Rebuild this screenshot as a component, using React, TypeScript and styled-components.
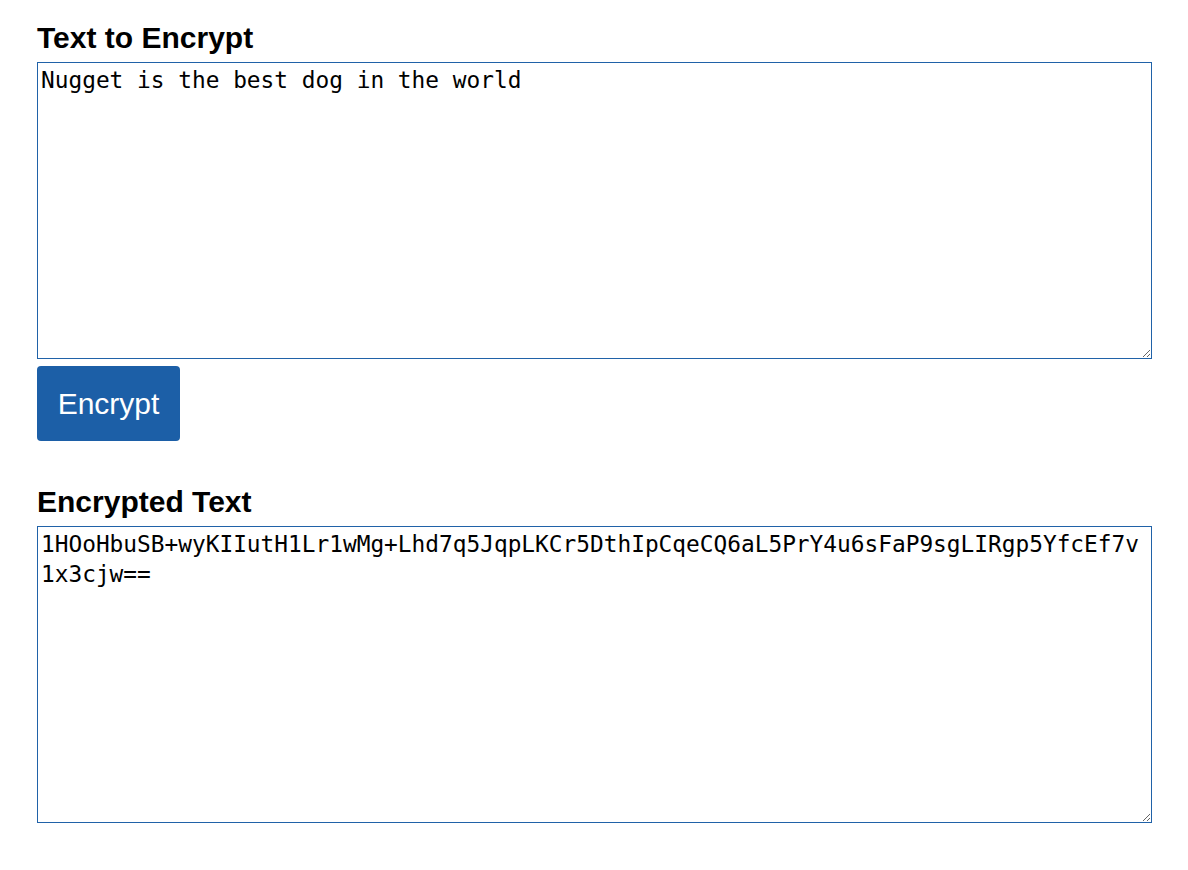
import React from "react";
import styled, { createGlobalStyle } from "styled-components";

const Global = createGlobalStyle`
  html, body { margin: 0; padding: 0; background: #ffffff; }
  body { font-family: "Liberation Sans", Arial, sans-serif; color: #000; }
`;

const Page = styled.main`
  display: flex;
  flex-direction: column;
  align-items: flex-start;
  padding: 20px 36px 40px 37px;
`;

const Heading = styled.h2<{ $top?: number }>`
  margin: ${(p) => p.$top ?? 0}px 0 6px 0;
  font-size: 30px;
  line-height: 36px;
  font-weight: 700;
`;

const Area = styled.textarea`
  box-sizing: border-box;
  width: 1115px;
  height: 297px;
  margin: 0;
  padding: 2px 3px;
  border: 1px solid #2062a8;
  border-radius: 0;
  font-family: "DejaVu Sans Mono", "Liberation Mono", monospace;
  font-size: 22.8px;
  line-height: 30px;
  color: #000;
  background: #fff;
  outline: none;
  resize: both;
  word-break: break-all;
`;

const Button = styled.button`
  box-sizing: border-box;
  margin-top: 7px;
  width: 143px;
  height: 75px;
  border: none;
  border-radius: 4px;
  background: #1c5fa7;
  color: #fff;
  font-family: "Liberation Sans", Arial, sans-serif;
  font-size: 30px;
  cursor: pointer;
`;

export default function App() {
  return (
    <>
      <Global />
      <Page>
        <Heading>Text to Encrypt</Heading>
        <Area defaultValue="Nugget is the best dog in the world" spellCheck={false} />
        <Button>Encrypt</Button>
        <Heading $top={43}>Encrypted Text</Heading>
        <Area
          readOnly
          spellCheck={false}
          defaultValue="1HOoHbuSB+wyKIIutH1Lr1wMg+Lhd7q5JqpLKCr5DthIpCqeCQ6aL5PrY4u6sFaP9sgLIRgp5YfcEf7v1x3cjw=="
        />
      </Page>
    </>
  );
}
